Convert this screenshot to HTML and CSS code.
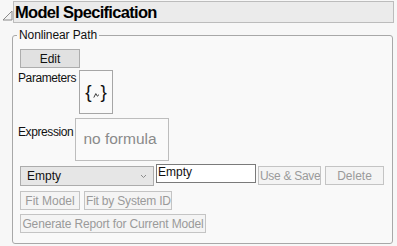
FILE: index.html
```html
<!DOCTYPE html>
<html lang="en">
<head>
    <meta charset="UTF-8">
    <title>Model Specification</title>
    <link rel="stylesheet" href="styles.css">
</head>
<body>
    <div class="outline">
        <!-- Disclosure icon + title bar -->
        <div class="outline-head">
            <svg class="disclose" width="11" height="11" viewBox="0 0 11 11">
                <polygon points="1,10 10,10 10,1" fill="#f2f2f2" stroke="#8a8a8a" stroke-width="1"/>
            </svg>
            <div class="title-bar">Model Specification</div>
        </div>

        <fieldset class="group">
            <legend>Nonlinear Path</legend>

            <button class="btn btn-edit">Edit</button>

            <div class="field-row">
                <span class="field-label">Parameters</span>
                <div class="param-box">
                    <span>{</span>
                    <svg class="caret" width="7" height="7" viewBox="0 0 7 7">
                        <path d="M0.8 5.6 L2.8 1.6 L4.4 4.2 L6 2.6" fill="none" stroke="#222" stroke-width="0.9"/>
                    </svg>
                    <span>}</span>
                </div>
            </div>

            <div class="field-row expr-row">
                <span class="field-label">Expression</span>
                <div class="expr-box">no formula</div>
            </div>

            <div class="model-row">
                <div class="combo">
                    <span>Empty</span>
                    <svg width="7" height="5" viewBox="0 0 7 5">
                        <path d="M1 1 L3.5 3.5 L6 1" fill="none" stroke="#8c8c8c" stroke-width="1"/>
                    </svg>
                </div>
                <div class="name-field">Empty</div>
                <button class="btn btn-off btn-use">Use &amp; Save</button>
                <button class="btn btn-off btn-delete">Delete</button>
            </div>

            <div class="btn-row">
                <button class="btn btn-off btn-fit">Fit Model</button>
                <button class="btn btn-off btn-sysid">Fit by System ID</button>
            </div>

            <div class="btn-row">
                <button class="btn btn-off btn-report">Generate Report for Current Model</button>
            </div>
        </fieldset>
    </div>
</body>
</html>
```

FILE: styles.css
```css
/* Global Styles */
body {
    margin: 0;
    background-color: #f7f7f7;
    font-family: "Liberation Sans", Arial, sans-serif;
    font-size: 12px;
    color: #111;
}

.outline {
    padding: 1px 3px 0 2px;
}

/* Title bar */
.outline-head {
    display: flex;
    align-items: flex-start;
}

.disclose {
    margin-top: 9px;
    flex: none;
}

.title-bar {
    flex: 1;
    height: 20px;
    line-height: 20px;
    padding-left: 1px;
    background-color: #ebebeb;
    border: 1px solid #bcbcbc;
    font-size: 16.5px;
    font-weight: bold;
    letter-spacing: -0.7px;
    color: #000;
}

/* Group box */
.group {
    margin: 5px 1px 0 10px;
    padding: 0 7px 10px 7px;
    border: 1px solid #a8a8a8;
    border-radius: 3px;
    background-color: #f9f9f9;
}

.group legend {
    padding: 0 2px;
    margin-left: -3px;
    line-height: 15px;
    letter-spacing: -0.1px;
    color: #111;
}

/* Buttons */
.btn {
    display: block;
    height: 19px;
    padding: 0 1px;
    font-family: "Liberation Sans", Arial, sans-serif;
    font-size: 12px;
    border: 1px solid #adadad;
    background-color: #e1e1e1;
    color: #111;
    white-space: nowrap;
    overflow: hidden;
}

.btn-edit {
    width: 60px;
    margin-top: 6px;
}

.btn-off {
    background-color: #f4f4f4;
    border-color: #c4c4c4;
    color: #9a9a9a;
}

/* Label + box rows */
.field-row {
    display: flex;
    align-items: flex-start;
    margin-top: 2px;
    margin-left: -2px;
}

.field-label {
    margin-top: 1px;
    margin-right: 3px;
    letter-spacing: -0.4px;
}

.param-box {
    width: 32px;
    height: 42px;
    border: 1px solid #a6a6a6;
    background-color: #fafafa;
    display: flex;
    align-items: center;
    justify-content: center;
    font-size: 19px;
    color: #111;
}

.caret {
    margin: 7px 1px 0 1px;
}

.expr-row {
    margin-top: 4px;
}

.expr-row .field-label {
    margin-top: 7px;
    margin-right: 2px;
}

.expr-box {
    width: 85px;
    height: 30px;
    padding: 11px 0 0 7px;
    border: 1px solid #bdbdbd;
    background-color: #fafafa;
    font-size: 15.5px;
    line-height: 18px;
    color: #8a8a8a;
}

/* Model selector row */
.model-row {
    display: flex;
    align-items: flex-start;
    margin-top: 3px;
}

.combo {
    width: 120px;
    height: 18px;
    margin-top: 2px;
    padding: 0 6px 0 6px;
    border: 1px solid #acacac;
    background-color: #e6e6e6;
    display: flex;
    align-items: center;
    justify-content: space-between;
}

.name-field {
    width: 96px;
    height: 17px;
    margin-left: 2px;
    padding: 0 1px;
    border: 1px solid #7a7a7a;
    background-color: #fff;
    line-height: 15px;
}

.btn-use {
    width: 63px;
    margin: 2px 0 0 2px;
    letter-spacing: -0.3px;
}

.btn-delete {
    width: 59px;
    margin: 2px 0 0 4px;
}

.btn-row {
    display: flex;
    gap: 4px;
    margin-top: 5px;
}

.btn-row + .btn-row {
    margin-top: 4px;
}

.btn-fit {
    width: 60px;
}

.btn-sysid {
    width: 88px;
    letter-spacing: -0.2px;
}

.btn-report {
    width: 186px;
    letter-spacing: -0.15px;
}
```
